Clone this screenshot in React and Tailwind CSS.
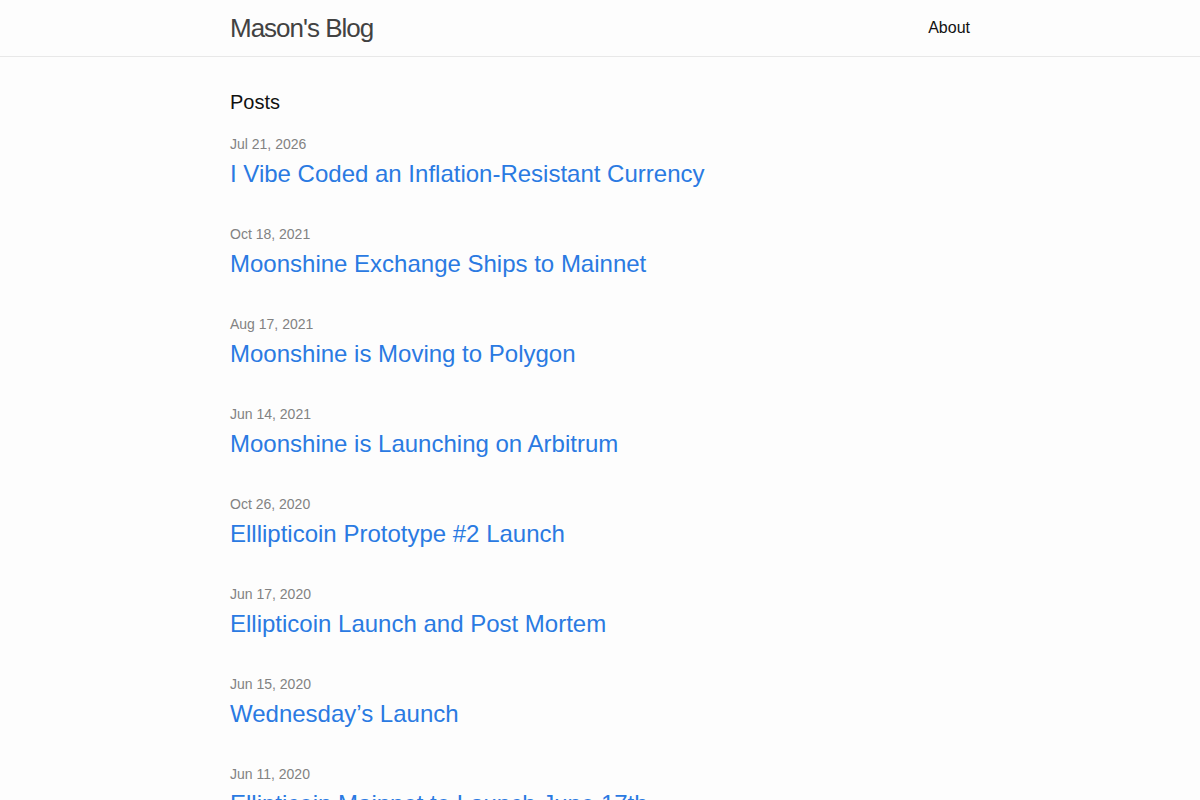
const posts = [
  { date: 'Jul 21, 2026', title: 'I Vibe Coded an Inflation-Resistant Currency' },
  { date: 'Oct 18, 2021', title: 'Moonshine Exchange Ships to Mainnet' },
  { date: 'Aug 17, 2021', title: 'Moonshine is Moving to Polygon' },
  { date: 'Jun 14, 2021', title: 'Moonshine is Launching on Arbitrum' },
  { date: 'Oct 26, 2020', title: 'Elllipticoin Prototype #2 Launch' },
  { date: 'Jun 17, 2020', title: 'Ellipticoin Launch and Post Mortem' },
  { date: 'Jun 15, 2020', title: 'Wednesday’s Launch' },
  { date: 'Jun 11, 2020', title: 'Ellipticoin Mainnet to Launch June 17th' },
]

export default function App() {
  return (
    <div className="min-h-screen bg-[#fdfdfd] text-[#111] font-['Liberation_Sans',Arial,sans-serif]">
      <header className="h-[57px] border-b border-[#e8e8e8]">
        <div className="mx-auto flex w-[740px] items-center justify-between">
          <a href="#" className="text-[26px] leading-[56px] tracking-[-1px] text-[#424242]">
            Mason's Blog
          </a>
          <nav>
            <a href="#" className="text-[16px] leading-[56px] text-[#111]">About</a>
          </nav>
        </div>
      </header>

      <main className="mx-auto w-[740px] pt-[30px]">
        <h2 className="mb-[17px] text-[20px] leading-[30px]">Posts</h2>
        <ul>
          {posts.map((post) => (
            <li key={post.date + post.title} className="mb-[32px]">
              <span className="block text-[14px] leading-[21px] text-[#828282]">{post.date}</span>
              <h3 className="mt-[1px]">
                <a href="#" className="block text-[24px] leading-[36px] text-[#2a7ae2]">
                  {post.title}
                </a>
              </h3>
            </li>
          ))}
        </ul>
      </main>
    </div>
  )
}
